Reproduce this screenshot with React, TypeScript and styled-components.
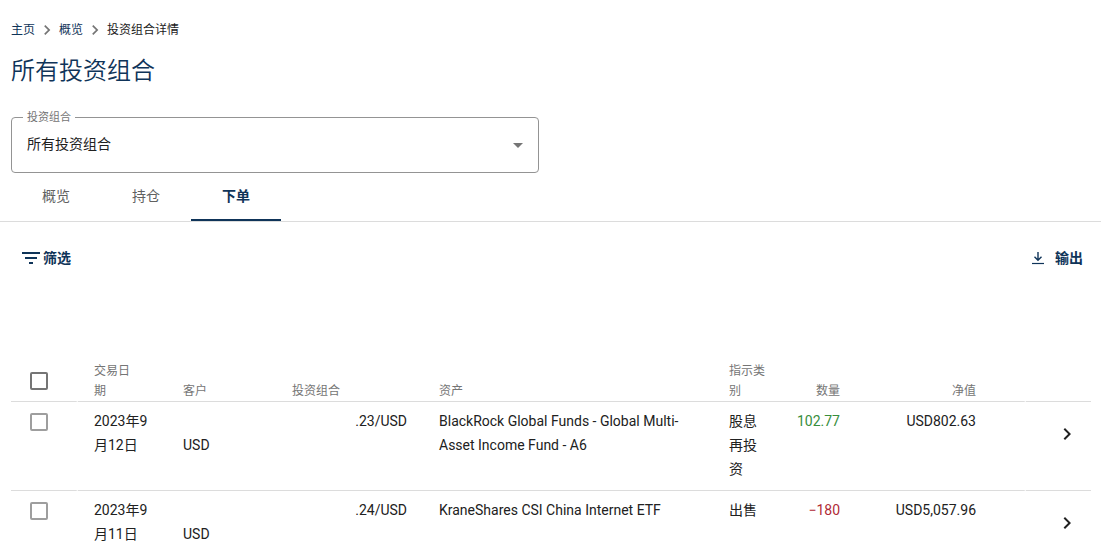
import React from "react";
import styled, { createGlobalStyle, css } from "styled-components";
import { MdArrowDropDown, MdChevronRight, MdFilterList } from "react-icons/md";

const GlobalStyle = createGlobalStyle`
  *, *::before, *::after { box-sizing: border-box; }
  body {
    margin: 0;
    background: #fff;
    color: #212121;
    font: 14px/24px Roboto, "Noto Sans CJK SC", sans-serif;
  }
  button, select { font: inherit; color: inherit; }
`;

const navy = "#0f3459";

const Page = styled.main`
  padding-top: 20px;
`;

const Breadcrumbs = styled.nav`
  padding: 0 11px;

  ol {
    display: flex;
    align-items: center;
    height: 20px;
    margin: 0;
    padding: 0;
    list-style: none;
    font-size: 12px;
    line-height: 20px;
  }
  li {
    display: flex;
    align-items: center;
  }
  svg {
    width: 20px;
    height: 20px;
    margin: 0 2px;
    color: #757575;
    stroke: currentColor;
  }
`;

const Crumb = styled.a`
  color: ${navy};
  text-decoration: none;
`;

const Title = styled.h1`
  margin: 15px 11px 0;
  color: ${navy};
  font-size: 24px;
  font-weight: 350;
  line-height: 32px;
`;

const Field = styled.div`
  position: relative;
  max-width: 528px;
  margin: 30px 11px 0;

  svg {
    position: absolute;
    top: 16px;
    right: 9px;
    width: 24px;
    height: 24px;
    color: #757575;
    pointer-events: none;
  }
`;

const FieldLabel = styled.label`
  position: absolute;
  top: -7px;
  left: 12px;
  padding: 0 4px;
  background: #fff;
  color: #757575;
  font-size: 11px;
  line-height: 16px;
`;

const Select = styled.select`
  display: block;
  width: 100%;
  height: 56px;
  padding: 0 40px 2px 15px;
  border: 1px solid #949494;
  border-radius: 4px;
  background: transparent;
  appearance: none;
`;

const Tabs = styled.div`
  display: flex;
  padding: 0 11px;
  border-bottom: 1px solid #dcdcdc;
`;

const Tab = styled.button<{ $active?: boolean }>`
  width: 90px;
  height: 48px;
  padding: 0 0 2px;
  border: 0;
  background: none;
  color: ${(p) => (p.$active ? navy : "#616161")};
  font-weight: ${(p) => (p.$active ? 700 : 400)};
  box-shadow: ${(p) => (p.$active ? `inset 0 -2px ${navy}` : "none")};
`;

const Toolbar = styled.div`
  display: flex;
  justify-content: space-between;
  padding: 24px 18px 0 19px;
`;

const ToolButton = styled.button<{ $gap: number }>`
  display: flex;
  align-items: center;
  gap: ${(p) => p.$gap}px;
  height: 24px;
  padding: 0;
  border: 0;
  background: none;
  color: ${navy};
  font-weight: 700;

  svg {
    flex: none;
  }
`;

const TableArea = styled.div`
  padding: 91px 10px 0 11px;
`;

const Table = styled.table`
  width: 100%;
  border-collapse: separate;
  border-spacing: 0;
  table-layout: fixed;
`;

const cell = css<{ $end?: boolean; $gap?: boolean }>`
  border-bottom: 1px solid #dcdcdc;
  text-align: ${(p) => (p.$end ? "right" : "left")};
  ${(p) => p.$gap && "border-right: 2px solid #fff;"}
`;

const HeadCell = styled.th<{ $end?: boolean; $gap?: boolean; $sorted?: boolean }>`
  ${cell}
  padding: 0 ${(p) => (p.$sorted ? 32 : 16)}px 0 ${(p) => (p.$end ? 8 : 16)}px;
  color: #757575;
  font-size: 12px;
  font-weight: 400;
  line-height: 20px;
  vertical-align: bottom;
`;

const Cell = styled.td<{ $end?: boolean; $gap?: boolean }>`
  ${cell}
  padding: 7px 16px 9px ${(p) => (p.$end ? 8 : 16)}px;
  vertical-align: top;
`;

const CheckHead = styled(HeadCell)`
  padding: 11px 0 11px 19px;
`;

const CheckCell = styled(Cell)`
  padding: 11px 0 0 19px;
`;

const ActionCell = styled(Cell)`
  padding: 8px 0 0 17px;
`;

const Checkbox = styled.input<{ $strong?: boolean }>`
  display: block;
  width: 18px;
  height: 18px;
  margin: 0;
  border: 2px solid ${(p) => (p.$strong ? "#757575" : "#9e9e9e")};
  border-radius: 2px;
  appearance: none;

  &:checked {
    background: ${navy};
  }
`;

const Client = styled.div`
  padding-top: 24px;
`;

const Quantity = styled.span<{ $negative: boolean }>`
  color: ${(p) => (p.$negative ? "#b02a37" : "#388e3c")};
`;

const RowButton = styled.button`
  display: grid;
  place-items: center;
  width: 48px;
  height: 48px;
  padding: 0;
  border: 0;
  background: none;

  svg {
    width: 24px;
    height: 24px;
  }
`;

const columnWidths = ["67px", "89px", "109px", "147px", "auto", "71px", "72px", "136px", "34px", "65px"];

const orders = [
  {
    date: "2023年9月12日",
    client: "USD",
    portfolio: ".23/USD",
    asset: "BlackRock Global Funds - Global Multi-Asset Income Fund - A6",
    type: "股息再投资",
    quantity: "102.77",
    net: "USD802.63",
  },
  {
    date: "2023年9月11日",
    client: "USD",
    portfolio: ".24/USD",
    asset: "KraneShares CSI China Internet ETF",
    type: "出售",
    quantity: "−180",
    net: "USD5,057.96",
  },
];

const DownloadIcon = () => (
  <svg width="14" height="14" viewBox="0 0 14 14" fill="none" stroke="currentColor" aria-hidden="true">
    <path d="M7 1v8M3.5 5.8L7 9.3l3.5-3.5" strokeWidth="1.4" />
    <path d="M1 12.5h12" strokeWidth="1.2" />
  </svg>
);

export default function App() {
  return (
    <Page lang="zh-CN">
      <GlobalStyle />
      <Breadcrumbs aria-label="导航">
        <ol>
          <li>
            <Crumb href="#home">主页</Crumb>
            <MdChevronRight aria-hidden="true" />
          </li>
          <li>
            <Crumb href="#overview">概览</Crumb>
            <MdChevronRight aria-hidden="true" />
          </li>
          <li aria-current="page">投资组合详情</li>
        </ol>
      </Breadcrumbs>
      <Title>所有投资组合</Title>
      <Field>
        <FieldLabel htmlFor="portfolio">投资组合</FieldLabel>
        <Select id="portfolio">
          <option>所有投资组合</option>
        </Select>
        <MdArrowDropDown aria-hidden="true" />
      </Field>
      <Tabs role="tablist">
        <Tab role="tab" aria-selected={false}>概览</Tab>
        <Tab role="tab" aria-selected={false}>持仓</Tab>
        <Tab role="tab" aria-selected $active>下单</Tab>
      </Tabs>
      <Toolbar>
        <ToolButton type="button" $gap={0}>
          <MdFilterList size={24} aria-hidden="true" />
          筛选
        </ToolButton>
        <ToolButton type="button" $gap={10}>
          <DownloadIcon />
          输出
        </ToolButton>
      </Toolbar>
      <TableArea>
        <Table>
          <colgroup>
            {columnWidths.map((width, i) => (
              <col key={i} style={{ width }} />
            ))}
          </colgroup>
          <thead>
            <tr>
              <CheckHead $gap>
                <Checkbox type="checkbox" aria-label="全选" $strong />
              </CheckHead>
              <HeadCell $sorted>交易日期</HeadCell>
              <HeadCell>客户</HeadCell>
              <HeadCell>投资组合</HeadCell>
              <HeadCell>资产</HeadCell>
              <HeadCell>指示类别</HeadCell>
              <HeadCell $end>数量</HeadCell>
              <HeadCell $end>净值</HeadCell>
              <HeadCell $gap />
              <HeadCell />
            </tr>
          </thead>
          <tbody>
            {orders.map((o) => (
              <tr key={o.date}>
                <CheckCell $gap>
                  <Checkbox type="checkbox" aria-label={o.date} />
                </CheckCell>
                <Cell>{o.date}</Cell>
                <Cell>
                  <Client>{o.client}</Client>
                </Cell>
                <Cell $end>{o.portfolio}</Cell>
                <Cell>{o.asset}</Cell>
                <Cell>{o.type}</Cell>
                <Cell $end>
                  <Quantity $negative={o.quantity.startsWith("−")}>{o.quantity}</Quantity>
                </Cell>
                <Cell $end>{o.net}</Cell>
                <Cell $gap />
                <ActionCell>
                  <RowButton type="button" aria-label="详情">
                    <MdChevronRight aria-hidden="true" />
                  </RowButton>
                </ActionCell>
              </tr>
            ))}
          </tbody>
        </Table>
      </TableArea>
    </Page>
  );
}
